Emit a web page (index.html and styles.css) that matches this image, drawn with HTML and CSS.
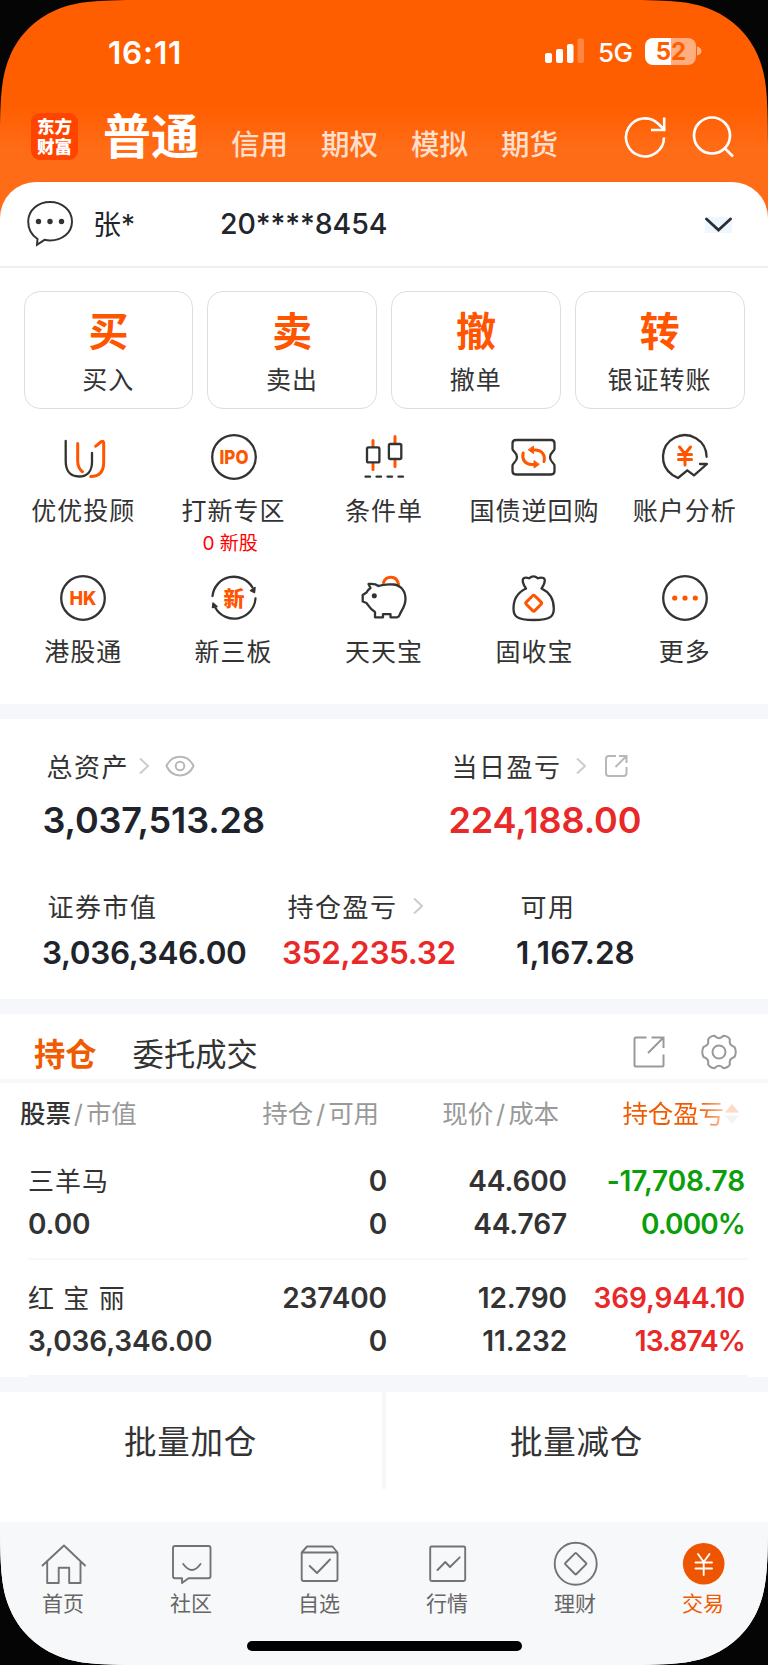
FILE: index.html
```html
<!DOCTYPE html>
<html lang="zh-CN">
<head>
    <meta charset="UTF-8">
    <meta name="viewport" content="width=device-width, initial-scale=1.0">
    <title>交易</title>
    <link rel="stylesheet" href="styles.css">
</head>
<body>
<div class="screen">
    <!-- Header -->
    <header class="header">
        <div class="status-bar">
            <span class="time">16:11</span>
            <div class="status-right">
                <svg width="40" height="26" viewBox="0 0 40 26" fill="#fff">
                    <rect x="0" y="15" width="7" height="10" rx="2"/>
                    <rect x="11" y="11" width="7" height="14" rx="2"/>
                    <rect x="22" y="6" width="6.5" height="19" rx="2"/>
                    <rect x="32.500" y="0.500" width="6.500" height="24.500" rx="2" opacity="0.25"/>
                </svg>
                <span class="network">5G</span>
                <div class="battery"><span class="b1">5</span><span class="b2">2</span></div>
                <svg class="battery-cap" width="5" height="10" viewBox="0 0 5 10"><path d="M0 0.500Q4.500 1.500 4.500 5T0 9.500Z" fill="#ffae80"/></svg>
            </div>
        </div>
        <div class="title-bar">
            <div class="logo">东方<br>财富</div>
            <h1>普通</h1>
            <nav class="modes">
                <span>信用</span><span>期权</span><span>模拟</span><span>期货</span>
            </nav>
            <svg class="refresh" width="44" height="44" viewBox="0 0 44 44" fill="none" stroke="#fff" stroke-width="2.600">
                <path d="M41 22.500A19 19 0 1 1 35.500 9L41 14.500"/>
                <path d="M41.200 2.500V15H28"/>
            </svg>
            <svg class="search" width="44" height="44" viewBox="0 0 44 44" fill="none" stroke="#fff" stroke-width="2.700">
                <circle cx="20" cy="19.500" r="18"/>
                <path d="M32.500 32L41 40.500"/>
            </svg>
        </div>
    </header>

    <!-- Account -->
    <section class="account">
        <svg width="48" height="48" viewBox="0 0 48 48">
            <path d="M11.500 40C5.500 36 2.200 30 2.200 22.500C2.200 11 12 3 24 3S46 11 46 22.500S36 41.500 24 41.500C22 41.500 20 41.200 18.500 40.800L11 45.800Z" fill="none" stroke="#333" stroke-width="2"/>
            <g fill="#333"><circle cx="12.500" cy="22.500" r="2.700"/><circle cx="24" cy="22.500" r="2.700"/><circle cx="35.500" cy="22.500" r="2.700"/></g>
        </svg>
        <span class="user">张*</span>
        <span class="number">20****8454</span>
        <svg class="down" width="27" height="16" viewBox="0 0 27 16"><path d="M1.500 2L13.500 13L25.500 2" fill="none" stroke="#2b2f36" stroke-width="2.800" stroke-linecap="round"/></svg>
    </section>

    <!-- Trade buttons -->
    <section class="trade">
        <div class="trade-btn"><b>买</b><span>买入</span></div>
        <div class="trade-btn"><b>卖</b><span>卖出</span></div>
        <div class="trade-btn"><b>撤</b><span>撤单</span></div>
        <div class="trade-btn"><b>转</b><span>银证转账</span></div>
    </section>

    <!-- Feature grid -->
    <section class="features">
        <div class="feature">
            <svg class="icon" viewBox="0 0 54 54">
                <path d="M9.700 11V31C9.700 41 14.500 46.500 23 46.500S36 41 36 32V23"/>
                <g class="o"><path d="M21.700 13.500V31C21.700 36 23 39 26.500 41.700"/><path d="M39.700 16.200L45.500 11.500Q47.700 10.500 47.700 13V32C47.700 42 43 46.500 34.700 46.500"/></g>
            </svg>
            <span>优优投顾</span>
        </div>
        <div class="feature">
            <svg class="icon" viewBox="0 0 54 54"><circle cx="27" cy="27" r="21.800"/><text x="27" y="34" textLength="29" lengthAdjust="spacingAndGlyphs" font-size="19">IPO</text></svg>
            <span>打新专区</span>
            <em>0 新股</em>
        </div>
        <div class="feature">
            <svg class="icon" viewBox="0 0 54 54">
                <g class="o"><path d="M16 10.500V16M16 34V39.500M38 6.500V13M38 31V36.500"/></g>
                <rect x="10" y="17.400" width="12.400" height="15" rx="1.500"/><rect x="31.900" y="14" width="12.400" height="15" rx="1.500"/>
                <path d="M8.500 46.700H13M19.500 46.700H24M30.500 46.700H35M41.500 46.700H46"/>
            </svg>
            <span>条件单</span>
        </div>
        <div class="feature">
            <svg class="icon" viewBox="0 0 54 54">
                <path d="M9 10H44Q47.500 10 47.500 13.500V19C47.500 21 43 22.500 43 27.200S47.500 33 47.500 35.500V41Q47.500 44.500 44 44.500H9Q5.500 44.500 5.500 41V35.500C5.500 33 10 32 10 27.200S5.500 21 5.500 19V13.500Q5.500 10 9 10Z"/>
                <g class="o arrows"><path d="M16.200 23C14.500 29 18 34.500 25 34.500H28"/><path d="M37 31.500C38.500 25 35 20 28 20H25.500"/><path class="fill" d="M27 31V38L32 34.500ZM26.500 16.500V23.500L21.500 20Z"/></g>
            </svg>
            <span>国债逆回购</span>
        </div>
        <div class="feature">
            <svg class="icon" viewBox="0 0 54 54">
                <path d="M48.600 26.800A21.800 21.800 0 1 0 14.500 45L20 48L29.300 40.300L36 45.300L49 34H42"/>
                <g class="o yen"><path d="M21.500 17L27 24L32.500 17M27 24V35M20.500 24.500H33.500M20.500 29.500H33.500"/></g>
            </svg>
            <span>账户分析</span>
        </div>
        <div class="feature">
            <svg class="icon" viewBox="0 0 54 54"><circle cx="27" cy="27" r="21.800"/><text x="27" y="33.800" textLength="27" lengthAdjust="spacingAndGlyphs" font-size="19">HK</text></svg>
            <span>港股通</span>
        </div>
        <div class="feature">
            <svg class="icon" viewBox="0 0 54 54">
                <path d="M5.500 25A21.500 21.500 0 0 1 45.500 16.500M48.500 27.500A21.500 21.500 0 0 1 8.500 37"/>
                <path class="dark tip" d="M48 16.500L47.500 21.500L43.500 19.500ZM6 32L10 35.500L5.500 36.500Z"/>
                <text x="27" y="34.500" font-size="21">新</text>
            </svg>
            <span>新三板</span>
        </div>
        <div class="feature">
            <svg class="icon" viewBox="0 0 54 54">
                <path class="o" d="M26.500 11.500C29 4.500 39.500 4 41.500 13"/>
                <path d="M11.500 13C16 12.500 19 13 21.500 15C26 13.200 31 13 37 13.500C44 14.500 48.500 20 48.500 28C48.500 35 45 38.500 43 43Q42 46.300 40 46.300H33.500V43.200H26V46.300H18V41C13.500 38.500 12 35.500 9.500 32L5.700 30.500V24L9.500 21.500C10.500 19 12 18 13.500 17Z"/>
                <circle class="dark" cx="17.300" cy="24.700" r="1.400"/>
            </svg>
            <span>天天宝</span>
        </div>
        <div class="feature">
            <svg class="icon" viewBox="0 0 54 54">
                <path d="M19 17.500C17 15 14 8.500 17 7Q19 6 22 7.300Q26.500 3.500 31 7.300Q34 6 36.500 7C39.500 8.500 36.500 15 34.500 17.500C43 21.500 46.800 28 46.800 37.500C46.800 44.500 45 49 26.700 49S6.500 44.500 6.500 37.500C6.500 28 10.500 21.500 19 17.500"/>
                <rect class="o" x="20.700" y="26.200" width="12" height="12" rx="1.500" transform="rotate(45 26.700 32.200)"/>
            </svg>
            <span>固收宝</span>
        </div>
        <div class="feature">
            <svg class="icon" viewBox="0 0 54 54"><circle cx="27" cy="27" r="21.800"/><g class="dots"><circle cx="16.700" cy="27" r="2.600"/><circle cx="27" cy="27" r="2.600"/><circle cx="37.300" cy="27" r="2.600"/></g></svg>
            <span>更多</span>
        </div>
    </section>

    <!-- Assets -->
    <section class="assets">
        <div class="assets-top">
            <div class="asset total">
                <div class="label">总资产
                    <svg class="more" width="10" height="18" viewBox="0 0 10 18"><path d="M1 1.500L9 9L1 16.500"/></svg>
                    <svg class="eye" width="30" height="22" viewBox="0 0 30 22"><path d="M1.500 11C7 -1.500 23 -1.500 28.500 11C23 23.500 7 23.500 1.500 11Z"/><circle cx="15" cy="11" r="4.300"/></svg>
                </div>
                <div class="value">3,037,513.28</div>
            </div>
            <div class="asset today">
                <div class="label">当日盈亏
                    <svg class="more" width="10" height="18" viewBox="0 0 10 18"><path d="M1 1.500L9 9L1 16.500"/></svg>
                    <svg class="share" width="24" height="24" viewBox="0 0 24 24"><path d="M12 2H5Q2 2 2 5V19Q2 22 5 22H19.500Q22.500 22 22.500 19V13M15 2H22.500V9M22.500 2L11.500 13"/></svg>
                </div>
                <div class="value red">224,188.00</div>
            </div>
        </div>
        <div class="assets-bottom">
            <div class="asset">
                <div class="label">证券市值</div>
                <div class="value">3,036,346.00</div>
            </div>
            <div class="asset">
                <div class="label">持仓盈亏
                    <svg class="more" width="10" height="18" viewBox="0 0 10 18"><path d="M1 1.500L9 9L1 16.500"/></svg>
                </div>
                <div class="value red">352,235.32</div>
            </div>
            <div class="asset available">
                <div class="label">可用</div>
                <div class="value">1,167.28</div>
            </div>
        </div>
    </section>

    <!-- Holdings -->
    <section class="holdings">
        <div class="tabs">
            <span class="tab active">持仓</span>
            <span class="tab">委托成交</span>
            <svg class="tab-share" width="34" height="34" viewBox="0 0 34 34"><path d="M14.500 2.500H4Q2.500 2.500 2.500 4V30Q2.500 31.500 4 31.500H30Q31.500 31.500 31.500 30V19.500M19.500 2.500H31.500V13M31.500 2.500L16 18"/></svg>
            <svg class="tab-gear" width="38" height="38" viewBox="0 0 38 38"><path d="M14.500 2.800Q19 7.500 23.500 2.800Q28.500 3.200 30 6.800Q28.500 12 34.500 14Q37 19 34.500 24Q28.500 26 30 31.200Q28.500 34.800 23.500 35.200Q19 30.500 14.500 35.200Q9.500 34.800 8 31.200Q9.500 26 3.500 24Q1 19 3.500 14Q9.500 12 8 6.800Q9.500 3.200 14.500 2.800Z"/><circle cx="19" cy="19" r="6.500"/></svg>
        </div>
        <div class="row head">
            <span><b>股票</b><i>/</i>市值</span>
            <span>持仓<i>/</i>可用</span>
            <span>现价<i>/</i>成本</span>
            <span class="sort">持仓盈亏<svg width="16" height="22" viewBox="0 0 16 22"><path d="M8 1L15 9.500H1Z" fill="#ffd9c4"/><path d="M8 21L15 12.500H1Z" fill="#f3f3f3"/></svg></span>
        </div>
        <div class="row">
            <span class="name">三羊马</span><span>0</span><span>44.600</span><span class="green">-17,708.78</span>
            <span>0.00</span><span>0</span><span>44.767</span><span class="green rate">0.000%</span>
        </div>
        <div class="row">
            <span class="name">红 宝 丽</span><span>237400</span><span>12.790</span><span class="red">369,944.10</span>
            <span>3,036,346.00</span><span>0</span><span>11.232</span><span class="red rate">13.874%</span>
        </div>
    </section>

    <!-- Batch actions -->
    <section class="batch">
        <div>批量加仓</div>
        <div>批量减仓</div>
    </section>

    <!-- Bottom navigation -->
    <footer class="tabbar">
        <nav>
            <div class="nav-item">
                <svg viewBox="0 0 48 48"><path d="M2.500 25.500L24 5.500L45 25.500M7.200 22V43H18.700V27.700H29.200V43H40.500V22"/></svg>
                <span>首页</span>
            </div>
            <div class="nav-item">
                <svg viewBox="0 0 48 48"><path d="M7 6H40.500Q42.500 6 42.500 8V36.300Q42.500 38.300 40.500 38.300H20.500L14 43V38.300H7Q5 38.300 5 36.300V8Q5 6 7 6ZM15.200 24Q24 36 32.500 24"/></svg>
                <span>社区</span>
            </div>
            <div class="nav-item">
                <svg viewBox="0 0 48 48"><path d="M5.700 12.500H41.500V39Q41.500 41 39.500 41H7.700Q5.700 41 5.700 39V12.500L11 6.500H36.500L41.500 12.500M13.700 26L21 33L34 19.500"/></svg>
                <span>自选</span>
            </div>
            <div class="nav-item">
                <svg viewBox="0 0 48 48"><rect x="6.200" y="6.500" width="35" height="34.500" rx="1.500"/><path d="M13.500 30L21.300 22L26 27L35.700 17.300"/></svg>
                <span>行情</span>
            </div>
            <div class="nav-item">
                <svg viewBox="0 0 48 48"><circle cx="23.700" cy="23.700" r="21"/><rect x="15.900" y="15.900" width="15.600" height="15.600" rx="1" transform="rotate(45 23.700 23.700)"/></svg>
                <span>理财</span>
            </div>
            <div class="nav-item current">
                <svg viewBox="0 0 48 48"><circle cx="23.700" cy="23.800" r="20.800"/><path d="M18 14L23.700 22L29.500 14M23.700 22V35M15.500 22.500H32M15.500 28.500H32"/></svg>
                <span>交易</span>
            </div>
        </nav>
        <div class="home-indicator"></div>
    </footer>
</div>
</body>
</html>
```
FILE: styles.css
```css
* {
    box-sizing: border-box;
}

body {
    margin: 0;
    background: #050505;
    font-family: Inter, "Noto Sans CJK SC", sans-serif;
    color: #333;
}

h1, b, i, em {
    font-style: normal;
    margin: 0;
}

svg {
    display: block;
    flex: none;
}

/* phone screen with rounded corners */
.screen {
    width: 768px;
    height: 1665px;
    display: flex;
    flex-direction: column;
    background: linear-gradient(#ff5e00 0, #ff5e00 107px, #ff6c17 150px, #ff6c17 240px, #fff 240px);
    clip-path: path("M0 145C0 92 2 75 10 56C14 46 21 36 28.500 28.500C36 21 46 14 56 10C75 2 92 0 145 0H623C676 0 693 2 712 10C722 14 732 21 739.500 28.500C747 36 754 46 758 56C766 75 768 92 768 145V1520C768 1573 766 1590 758 1609C754 1619 747 1629 739.500 1636.500C732 1644 722 1651 712 1655C693 1663 676 1665 623 1665H145C92 1665 75 1663 56 1655C46 1651 36 1644 28.500 1636.500C21 1629 14 1619 10 1609C2 1590 0 1573 0 1520Z");
}

/* header */
.header {
    height: 182px;
    flex: none;
    color: #fff;
}

.status-bar {
    height: 104px;
    padding: 0 66px 2px 108px;
    display: flex;
    align-items: center;
    justify-content: space-between;
}

.time {
    margin-top: 3px;
    font-size: 31.5px;
    font-weight: 600;
    letter-spacing: 0.8px;
}

.status-right {
    display: flex;
    align-items: center;
}

.network {
    margin: 3px 13px 0 13px;
    width: 34px;
    font-size: 26px;
    font-weight: 500;
    letter-spacing: -0.5px;
}

.battery {
    width: 51px;
    height: 27px;
    border-radius: 8px;
    background: linear-gradient(90deg, #fff 26px, #ffae80 26px);
    display: flex;
    font-size: 24px;
    line-height: 28px;
    font-weight: 700;
    color: #ff5e00;
}

.b1 {
    width: 26px;
    text-align: right;
}

.battery-cap {
    margin-left: 1px;
}

.title-bar {
    height: 78px;
    display: flex;
    padding-left: 31px;
}

.logo {
    width: 47px;
    height: 47px;
    margin-top: 9px;
    padding-top: 4px;
    border-radius: 9px;
    background: #ff4400;
    font-size: 17.5px;
    line-height: 19.5px;
    font-weight: 900;
    text-align: center;
}

h1 {
    margin-left: 25px;
    width: 97px;
    font-size: 48px;
    font-weight: 700;
    line-height: 66px;
    white-space: nowrap;
}

.modes {
    display: flex;
    margin-left: 31px;
    font-size: 28.5px;
    line-height: 82px;
    font-weight: 500;
    color: #ffdfcc;
}

.modes span {
    width: 90px;
}

.refresh {
    margin: 11px 0 0 32px;
}

.search {
    margin: 11.5px 0 0 25px;
}

/* account */
.account {
    height: 86px;
    flex: none;
    display: flex;
    align-items: center;
    padding: 0 36px 2px 26px;
    border-radius: 36px 36px 0 0;
    border-bottom: 2px solid #f0f0f0;
    background: #fff;
    font-size: 28px;
    font-weight: 500;
    color: #22252b;
}

.user {
    width: 127px;
    margin-left: 19px;
    font-weight: 400;
}

.number {
    font-size: 28.5px;
    letter-spacing: -0.1px;
}

.down {
    margin: 3px 0 0 auto;
    background: #eef6ff;
}

/* trade buttons */
.trade {
    padding: 23px 23.5px 0;
    display: grid;
    grid-template-columns: repeat(4, 1fr);
    gap: 14px;
    background: #fff;
}

.trade-btn {
    height: 118px;
    border: 1.5px solid #dedede;
    border-radius: 16px;
    display: flex;
    flex-direction: column;
    align-items: center;
}

.trade-btn b {
    margin-top: 11px;
    font-size: 40px;
    line-height: 58px;
    font-weight: 700;
    color: #ff5500;
}

.trade-btn span {
    font-size: 25px;
    line-height: 38px;
    letter-spacing: 1px;
}

/* feature grid */
.features {
    height: 295px;
    padding: 21px 8px 0;
    display: grid;
    grid-template-columns: repeat(5, 1fr);
    grid-auto-rows: 141px;
    background: #fff;
}

.feature {
    display: flex;
    flex-direction: column;
    align-items: center;
    font-size: 25px;
    line-height: 36px;
    letter-spacing: 1px;
}

.feature span {
    margin-top: 9px;
    white-space: nowrap;
}

.feature em {
    margin-top: -3px;
    padding-right: 7px;
    font-size: 19px;
    letter-spacing: 0;
    color: #ff0000;
}

.icon {
    width: 54px;
    height: 54px;
    fill: none;
    stroke: #333;
    stroke-width: 2.3;
    stroke-linecap: round;
    stroke-linejoin: round;
}

.icon text {
    fill: #ff5500;
    stroke: none;
    font-weight: 800;
    letter-spacing: 0;
    text-anchor: middle;
}

.icon .o {
    stroke: #ff5500;
    stroke-width: 3;
}

.icon .dark {
    fill: #333;
}

.icon .fill {
    fill: #ff5500;
    stroke-width: 1;
}

.icon .tip {
    stroke-width: 1.5;
}

.icon .dots {
    fill: #ff5500;
    stroke: none;
}

/* assets */
.assets {
    height: 310px;
    border-top: 15px solid #f5f7fa;
    border-bottom: 15px solid #f5f7fa;
    background: #fff;
    color: #20242a;
}

.assets-top {
    display: grid;
    grid-template-columns: 406px 1fr;
    padding: 26px 0 0 42.5px;
}

.assets-bottom {
    display: grid;
    grid-template-columns: 240px 233px 1fr;
    padding: 42px 0 0 42px;
}

.label {
    display: flex;
    align-items: center;
    padding-left: 4px;
    height: 40px;
    font-size: 26px;
    letter-spacing: 1.5px;
    color: #333;
}

.assets-bottom .label {
    padding-left: 5.5px;
}

.value {
    font-size: 31.5px;
    line-height: 46px;
    font-weight: 600;
    letter-spacing: -0.35px;
}

.available .value {
    padding-left: 1px;
    letter-spacing: 0.1px;
}

.assets-top .value {
    margin-top: 12px;
    font-size: 36px;
    line-height: 46px;
    letter-spacing: -0.1px;
}

.assets-bottom .value {
    margin-top: 5px;
}

.label svg {
    margin-top: 1px;
    fill: none;
    stroke: #b8b8b8;
    stroke-width: 2;
}

.label .more {
    margin-left: 10px;
    stroke: #ccc;
}

.label .eye {
    margin-left: 16px;
}

.today .label {
    padding-left: 3px;
}

.today .more {
    margin-left: 14px;
}

.assets-bottom .more {
    margin-left: 15px;
}

.label .share {
    margin-left: 18px;
}

.assets .red, .red {
    color: #e92828;
}

.green {
    color: #0a9f0a;
}

/* holdings */
.holdings {
    height: 362.5px;
    background: #fff;
}

.tabs {
    height: 68.5px;
    display: flex;
    align-items: center;
    padding: 12px 30px 0 34px;
    border-bottom: 4px solid #f8f8f8;
    font-size: 31.3px;
}

.tab {
    margin-right: 36px;
}

.tab.active {
    font-weight: 700;
    color: #f05a00;
}

.tabs svg {
    fill: none;
    stroke: #999;
    stroke-width: 2;
}

.tab-share {
    margin-left: auto;
    margin-right: 34px;
}

.row {
    display: grid;
    grid-template-columns: 209px 150px 180px 178px;
    grid-auto-rows: 43px;
    height: 117px;
    margin: 0 20px 0 28px;
    padding-top: 17px;
    border-bottom: 2px solid #f7f7f7;
    font-size: 28px;
    line-height: 43px;
    font-weight: 600;
    letter-spacing: -0.1px;
    text-align: right;
    white-space: nowrap;
}

.row span:nth-child(4n + 1) {
    text-align: left;
}

.row .name {
    font-size: 26px;
    font-weight: 400;
    letter-spacing: 1px;
}

.row .rate {
    letter-spacing: -0.9px;
}

.head {
    height: 60px;
    margin-left: 20px;
    padding-top: 9.5px;
    border: 0;
    grid-template-columns: 209px 150px 180px 181px;
    font-size: 25.5px;
    font-weight: 400;
    color: #999;
}

.head b {
    font-weight: 500;
    color: #333;
}

.head i {
    margin: 0 3px;
}

.head .sort {
    display: flex;
    align-items: center;
    justify-content: flex-end;
    background: linear-gradient(90deg, #f05a00 140px, #ffd9c4 172px);
    background-clip: text;
    color: transparent;
}

/* batch actions */
.batch {
    height: 145.5px;
    padding-bottom: 33px;
    border-top: 15px solid #f5f7fa;
    display: flex;
    background: #fff;
    font-size: 32.500px;
    letter-spacing: 0.8px;
}

.batch div {
    flex: 1;
    display: flex;
    align-items: center;
    justify-content: center;
    padding: 0 1px 1px 0;
}

.batch div:first-child {
    border-right: 4px solid #f5f7fa;
}

/* bottom navigation */
.tabbar {
    flex: 1;
    background: #f7f8fa;
}

.tabbar nav {
    display: flex;
    padding-top: 18px;
}

.nav-item {
    width: 128px;
    display: flex;
    flex-direction: column;
    align-items: center;
    font-size: 21px;
    line-height: 32px;
    color: #666;
}

.nav-item span {
    padding-right: 2px;
}

.nav-item svg {
    width: 48px;
    height: 48px;
    fill: none;
    stroke: #737373;
    stroke-width: 1.9;
    stroke-linejoin: round;
    stroke-linecap: round;
}

.nav-item.current {
    color: #f05a00;
}

.nav-item.current circle {
    fill: #ee5500;
    stroke: none;
}

.nav-item.current path {
    stroke: #fff;
}

.home-indicator {
    width: 275px;
    height: 10px;
    margin: 21px auto 0;
    border-radius: 5px;
    background: #000;
}
```
